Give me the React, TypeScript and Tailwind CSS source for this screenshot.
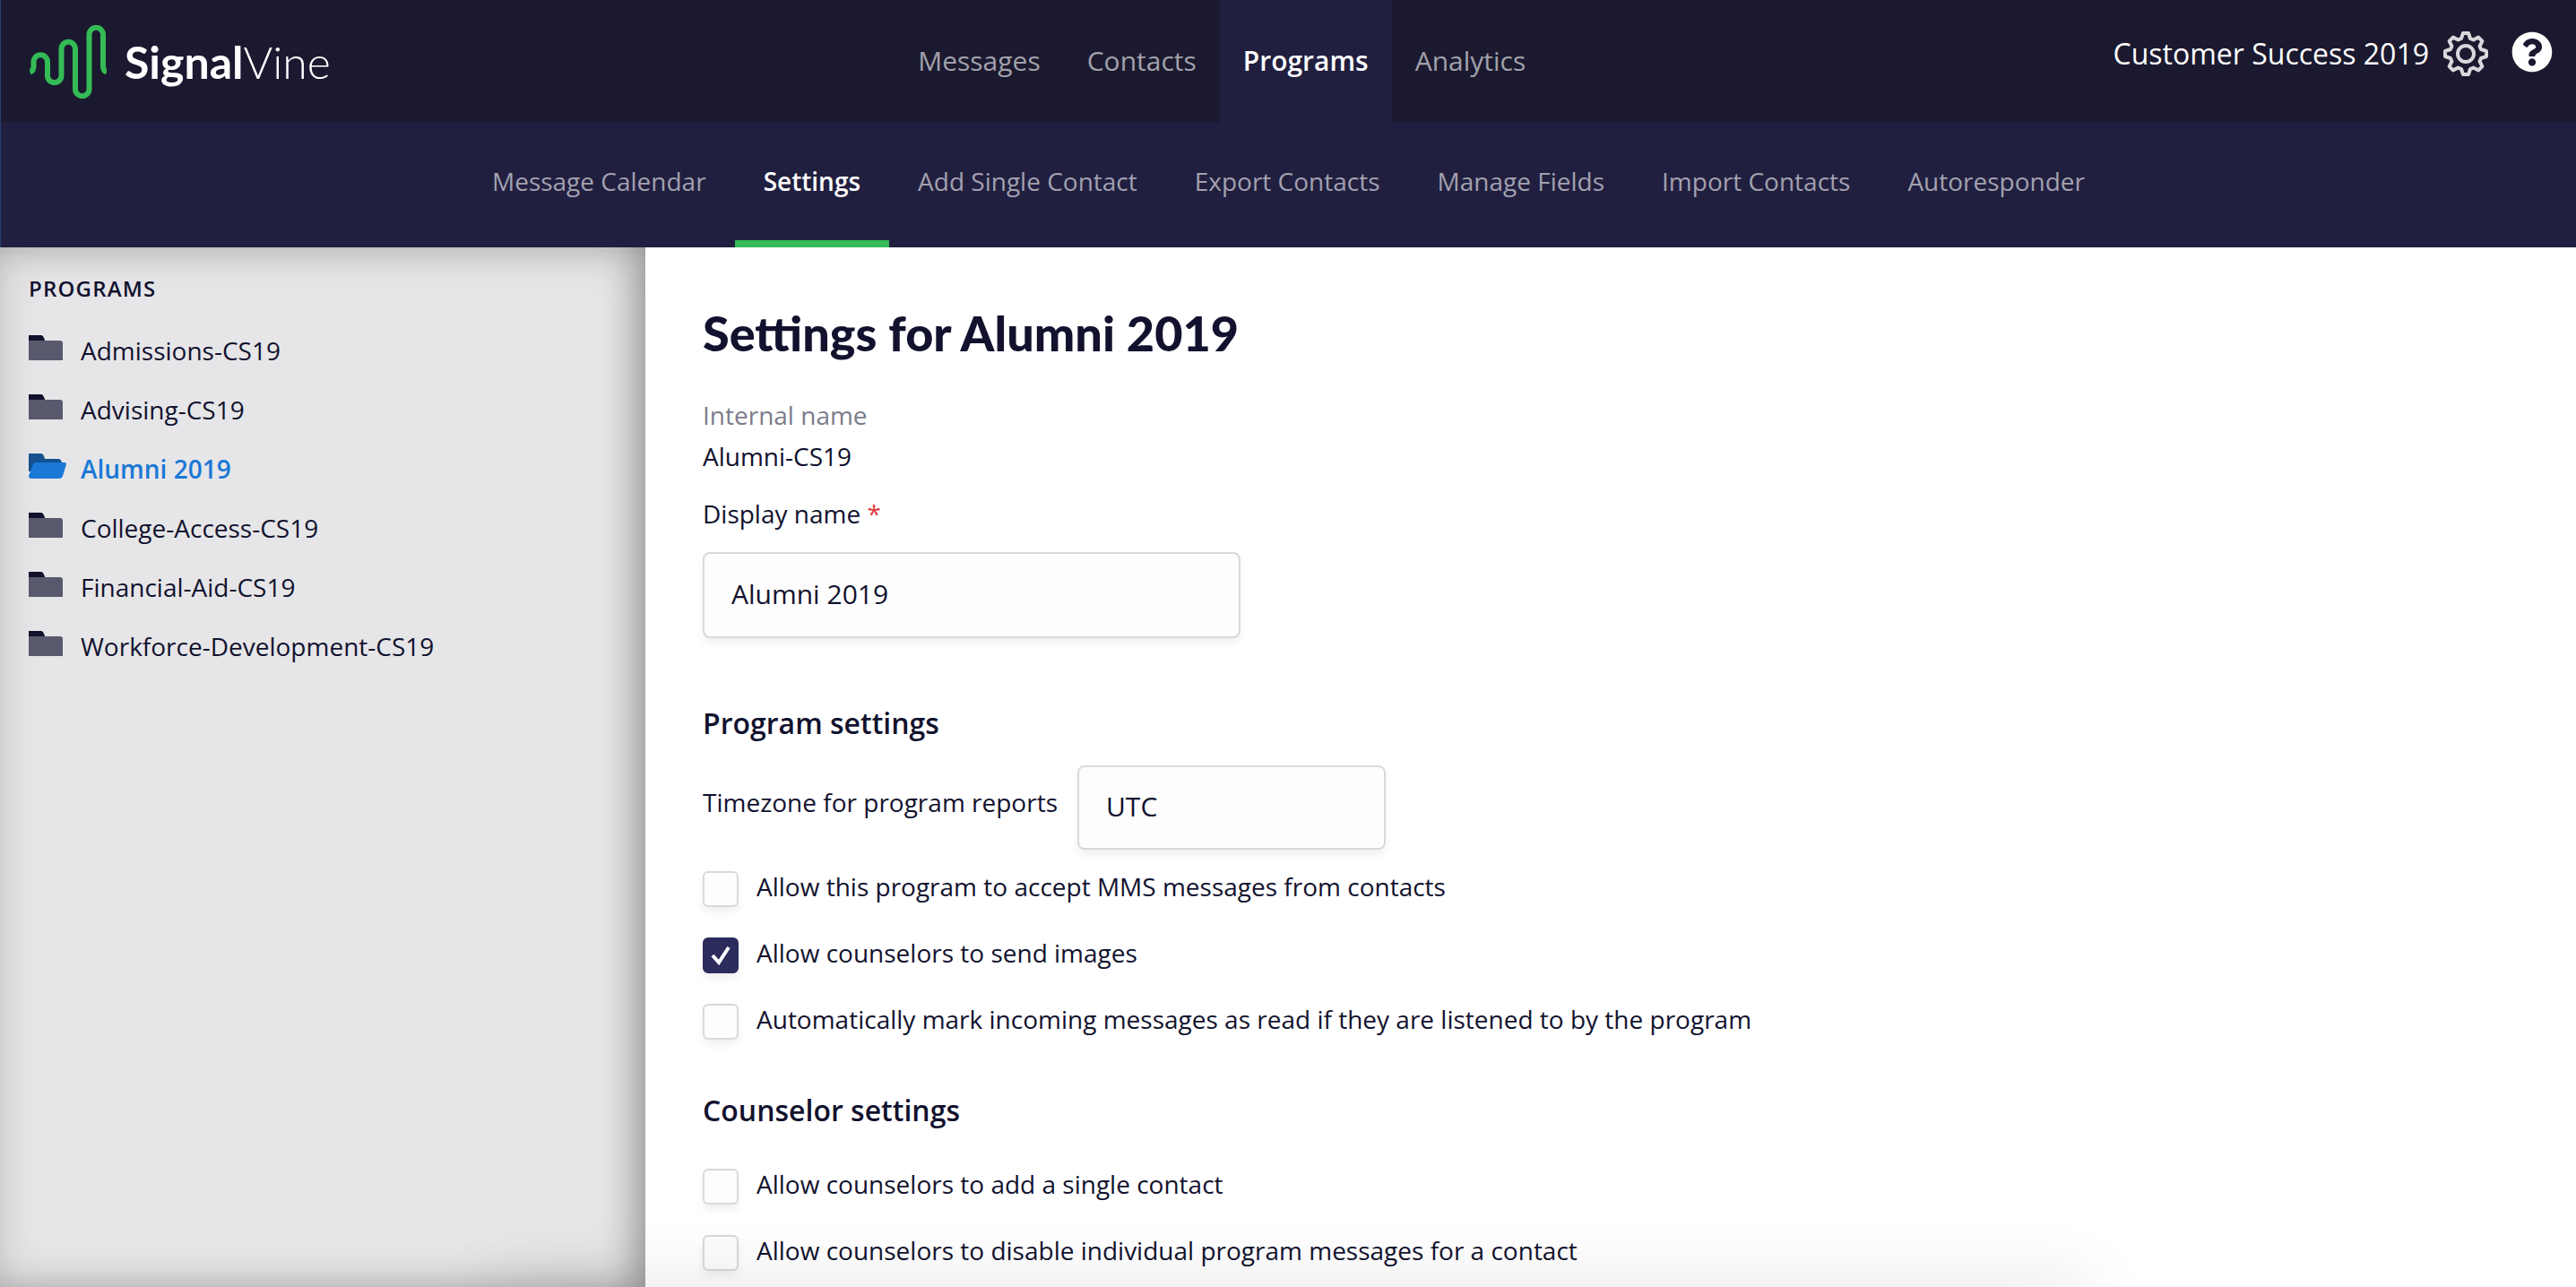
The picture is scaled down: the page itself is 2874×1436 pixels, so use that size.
import { useState } from 'react';
import { FaQuestionCircle } from 'react-icons/fa';

const mainNav = ['Messages', 'Contacts', 'Programs', 'Analytics'];

const subNav = [
  'Message Calendar',
  'Settings',
  'Add Single Contact',
  'Export Contacts',
  'Manage Fields',
  'Import Contacts',
  'Autoresponder'
];

const programs = [
  'Admissions-CS19',
  'Advising-CS19',
  'Alumni 2019',
  'College-Access-CS19',
  'Financial-Aid-CS19',
  'Workforce-Development-CS19'
];

const programOptions = [
  { id: 'accept-mms', label: 'Allow this program to accept MMS messages from contacts', checked: false },
  { id: 'send-images', label: 'Allow counselors to send images', checked: true },
  {
    id: 'auto-read',
    label: 'Automatically mark incoming messages as read if they are listened to by the program',
    checked: false
  }
];

const counselorOptions = [
  { id: 'add-contact', label: 'Allow counselors to add a single contact', checked: false },
  {
    id: 'disable-messages',
    label: 'Allow counselors to disable individual program messages for a contact',
    checked: false
  }
];

function Logo() {
  return (
    <a href="#home" className="flex items-center gap-5 pt-0.5 text-white">
      <svg className="h-[82px] w-[86px]" viewBox="32 28 86 82" fill="none" stroke="#34bb56" strokeWidth="6">
        <path d="M32.500 80.500Q36.500 79 36.500 74V69a7.750 7.750 0 0 1 15.500 0V84.500a7.750 7.750 0 0 0 15.500 0V54.500a7.750 7.750 0 0 1 15.500 0V99.500a7.750 7.750 0 0 0 15.500 0V38.500a7.750 7.750 0 0 1 15.500 0V74Q114 79 118 80.500" />
      </svg>
      <span className="font-[Lato,sans-serif] text-[50px] leading-[56px] font-bold">
        Signal<span className="font-light">Vine</span>
      </span>
    </a>
  );
}

function Gear() {
  // one tooth, repeated every 45 degrees around the centre
  const tooth = [
    [-5, -17],
    [-3, -23],
    [3, -23],
    [5, -17]
  ];
  const points = Array.from({ length: 8 }).flatMap((_, i) => {
    const a = (i * Math.PI) / 4;
    return tooth.map(([x, y]) => `${x * Math.cos(a) - y * Math.sin(a)},${x * Math.sin(a) + y * Math.cos(a)}`);
  });

  return (
    <svg
      className="h-[50px] w-[50px]"
      viewBox="-25 -25 50 50"
      fill="none"
      stroke="#d8d8dc"
      strokeWidth="4"
      strokeLinejoin="round"
    >
      <polygon points={points.join(' ')} />
      <circle r="9" />
    </svg>
  );
}

function FolderIcon({ open }: { open: boolean }) {
  if (open) {
    return (
      <svg className="h-7 w-[42px] shrink-0" viewBox="0 0 42 28">
        <path d="M0 0H14Q16 0 17 3L18 6H33Q36 6 37 10V20H0Z" fill="#15508f" />
        <path d="M8 10H40Q42 10 42 12L38 25Q37 28 34 28H3Q0 28 0 25L5 12Q6 10 8 10Z" fill="#1a78d6" />
      </svg>
    );
  }
  return (
    <svg className="h-7 w-[42px] shrink-0" viewBox="0 0 42 28">
      <path d="M0 0H14Q16 0 17 3L19 8H0Z" fill="#12122e" />
      <path d="M0 6H35Q38 6 38 9V28H0Z" fill="#59596e" />
    </svg>
  );
}

function Checkbox({ id, label, checked }: { id: string; label: string; checked: boolean }) {
  return (
    <li className="flex items-start gap-5">
      <span className="relative h-10 w-10 shrink-0">
        <input
          id={id}
          type="checkbox"
          defaultChecked={checked}
          className="peer block h-10 w-10 appearance-none rounded-md border-2 border-[#d9d9da] bg-[#fdfdfd] shadow-[0_6px_10px_rgba(0,0,0,0.06)] checked:border-[#2b2c5c] checked:bg-[#2b2c5c]"
        />
        <svg
          className="pointer-events-none absolute inset-0 hidden h-10 w-10 peer-checked:block"
          viewBox="0 0 40 40"
          fill="none"
          stroke="#fff"
          strokeWidth="4"
        >
          <path d="M11 20L18 28L29 11" />
        </svg>
      </span>
      <label htmlFor={id} className="leading-[34px]">
        {label}
      </label>
    </li>
  );
}

export default function App() {
  const [displayName, setDisplayName] = useState('Alumni 2019');

  return (
    <div className="relative flex min-h-screen flex-col overflow-hidden bg-white font-['Open_Sans',sans-serif] text-[28px] text-[#12122e]">
      <div className="border-l border-[#243f6b]">
        <header className="flex h-[136px] items-center justify-between bg-[#1b192f] pr-[26px] pl-8">
          <Logo />
          <nav className="flex h-full text-[30px] text-[#a2a1ab]">
            {mainNav.map((item) => (
              <a
                key={item}
                href={`#${item}`}
                className={`flex items-center px-[26px] pb-0.5 ${item === 'Programs' ? 'bg-[#211f3f] font-semibold text-white' : ''}`}
              >
                {item}
              </a>
            ))}
          </nav>
          <div className="flex items-center pb-4 text-[32px] text-white">
            <span>Customer Success 2019</span>
            <button aria-label="Settings" className="ml-4">
              <Gear />
            </button>
            <button aria-label="Help" className="ml-[26px] pb-1">
              <FaQuestionCircle className="h-[46px] w-[46px]" />
            </button>
          </div>
        </header>

        <nav className="flex h-[140px] justify-center bg-[#211f3f] text-[#a2a1b0]">
          {subNav.map((item) => (
            <a
              key={item}
              href={`#${item}`}
              className={`flex items-center border-y-8 border-t-transparent px-8 pb-2 ${item === 'Settings' ? 'border-b-[#34bb56] font-semibold text-white' : 'border-b-transparent'}`}
            >
              {item}
            </a>
          ))}
        </nav>
      </div>

      <div className="flex flex-1">
        <aside className="w-[720px] shrink-0 bg-[#e6e6e8] px-8 pt-[30px] shadow-[inset_-20px_0_40px_-12px_rgba(0,0,0,0.24),inset_-6px_0_50px_rgba(0,0,0,0.2)]">
          <h2 className="text-[24px] leading-8 font-semibold tracking-wider">PROGRAMS</h2>
          <ul className="mt-9 flex flex-col gap-8">
            {programs.map((program) => {
              const active = program === 'Alumni 2019';
              return (
                <li key={program}>
                  <a
                    href={`#${program}`}
                    className={`flex items-start gap-4 leading-[34px] ${active ? 'font-semibold text-[#1a78d6]' : ''}`}
                  >
                    <FolderIcon open={active} />
                    {program}
                  </a>
                </li>
              );
            })}
          </ul>
        </aside>

        <main className="flex-1 px-16 pt-16">
          <h1 className="font-[Lato,sans-serif] text-[54px] leading-[64px] font-black">Settings for Alumni 2019</h1>

          <dl className="mt-9 leading-[46px]">
            <dt className="text-[#7b7b8c]">Internal name</dt>
            <dd>Alumni-CS19</dd>
          </dl>

          <label htmlFor="display-name" className="mt-[18px] block leading-[46px]">
            Display name <span className="text-[#e0393e]">*</span>
          </label>
          <input
            id="display-name"
            type="text"
            value={displayName}
            onChange={(e) => setDisplayName(e.target.value)}
            className="mt-5 block h-24 w-[600px] rounded-lg border-2 border-[#d9d9da] bg-[#fdfdfd] px-[30px] pb-1 text-[30px] shadow-[0_6px_10px_rgba(0,0,0,0.06)]"
          />

          <h2 className="mt-[72px] text-[32px] leading-[46px] font-semibold">Program settings</h2>
          <div className="mt-6 flex items-center gap-[22px]">
            <label htmlFor="timezone" className="pb-3 leading-[46px]">
              Timezone for program reports
            </label>
            <select
              id="timezone"
              className="h-[94px] w-[344px] appearance-none rounded-lg border-2 border-[#d9d9da] bg-[#fdfdfd] px-[30px] pb-1 text-[30px] shadow-[0_6px_10px_rgba(0,0,0,0.06)]"
            >
              <option>UTC</option>
            </select>
          </div>
          <ul className="mt-6 flex flex-col gap-[34px]">
            {programOptions.map((option) => (
              <Checkbox key={option.id} {...option} />
            ))}
          </ul>

          <h2 className="mt-14 text-[32px] leading-[46px] font-semibold">Counselor settings</h2>
          <ul className="mt-[42px] flex flex-col gap-[34px]">
            {counselorOptions.map((option) => (
              <Checkbox key={option.id} {...option} />
            ))}
          </ul>
        </main>
      </div>

      {/* Soft shadow along the bottom edge */}
      <div className="pointer-events-none absolute inset-x-0 -bottom-10 mx-auto h-10 w-[62%] shadow-[0_0_80px_rgba(0,0,0,0.14)]"></div>
    </div>
  );
}
